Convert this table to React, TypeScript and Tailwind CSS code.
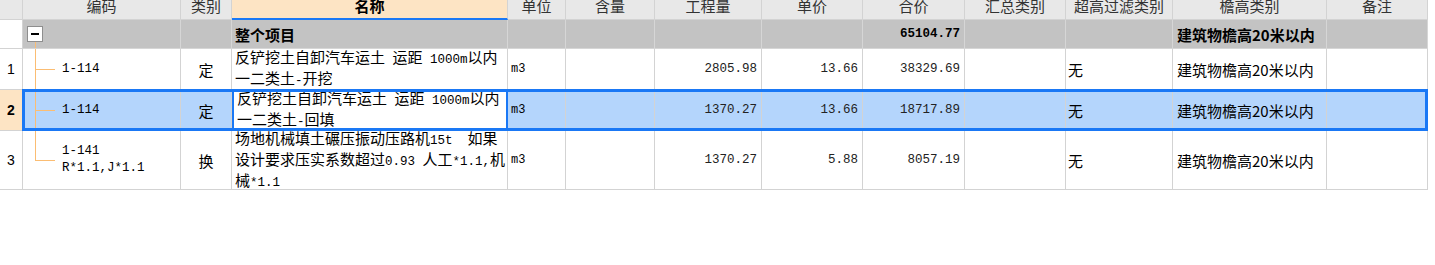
import React from 'react';

const COLS =
  'grid grid-cols-[23px_158px_51px_276px_58px_89px_107px_101px_102px_101px_107px_154px_101px]';

const cell = 'border-r border-b border-[#d3d3d3] flex items-center overflow-hidden whitespace-nowrap';

// half-width latin run, like the SimSun digits of the original
const L: React.FC<{ children: React.ReactNode }> = ({ children }) => (
  <span className="font-['Liberation_Mono',monospace] text-[12.5px] whitespace-pre">{children}</span>
);

const headers = [
  '',
  '编码',
  '类别',
  '名称',
  '单位',
  '含量',
  '工程量',
  '单价',
  '合价',
  '汇总类别',
  '超高过滤类别',
  '檐高类别',
  '备注',
];

interface Row {
  no: number;
  code: React.ReactNode;
  kind: string;
  name: React.ReactNode;
  unit: string;
  qty: string;
  price: string;
  total: string;
  height: string;
  last?: boolean;
  selected?: boolean;
}

const rows: Row[] = [
  {
    no: 1,
    code: '1-114',
    kind: '定',
    name: (
      <>
        反铲挖土自卸汽车运土<L> </L>运距<L> 1000m</L>以内
        <br />
        一二类土<L>-</L>开挖
      </>
    ),
    unit: 'm3',
    qty: '2805.98',
    price: '13.66',
    total: '38329.69',
    height: 'h-[41px]',
  },
  {
    no: 2,
    code: '1-114',
    kind: '定',
    name: (
      <>
        反铲挖土自卸汽车运土<L> </L>运距<L> 1000m</L>以内
        <br />
        一二类土<L>-</L>回填
      </>
    ),
    unit: 'm3',
    qty: '1370.27',
    price: '13.66',
    total: '18717.89',
    height: 'h-[41px]',
    selected: true,
  },
  {
    no: 3,
    code: (
      <>
        1-141
        <br />
        R*1.1,J*1.1
      </>
    ),
    kind: '换',
    name: (
      <>
        场地机械填土碾压振动压路机<L>15t  </L>如果
        <br />
        设计要求压实系数超过<L>0.93 </L>人工<L>*1.1,</L>机
        <br />
        械<L>*1.1</L>
      </>
    ),
    unit: 'm3',
    qty: '1370.27',
    price: '5.88',
    total: '8057.19',
    height: 'h-[59px]',
    last: true,
  },
];

const TREE = 'bg-[#fbbd73]';

const TreeLines: React.FC<{ last?: boolean }> = ({ last }) => (
  <>
    <div className={`absolute left-[12px] top-0 w-px ${TREE} ${last ? 'h-1/2' : 'h-full'}`} />
    <div className={`absolute left-[12px] top-1/2 h-px w-[20px] ${TREE}`} />
  </>
);

const num = "justify-end pr-[4px] font-['Liberation_Mono',monospace] text-[12.5px] text-[#222]";

export default function App() {
  return (
    <div className="w-[1435px] h-[265px] overflow-hidden bg-white font-['Noto_Sans_CJK_SC',sans-serif] text-[15px] leading-[17px] text-black">
      <div className="-mt-[8px] w-[1428px]">
        {/* header */}
        <div className={`${COLS} h-[28px]`}>
          {headers.map((h, i) => (
            <div
              key={i}
              className={`${cell} justify-center text-[#333] ${
                i === 3 ? 'bg-[#fde4c4] border-b-2 border-b-[#1a78f5] font-bold text-black' : 'bg-[#e8e8e8]'
              }`}
            >
              {h}
            </div>
          ))}
        </div>

        {/* group row */}
        <div className={`${COLS} h-[29px]`}>
          <div className={`${cell} bg-white`} />
          <div className={`${cell} bg-[#c3c3c3] relative border-r-[#d6d6d6] border-b-[#d6d6d6]`}>
            <div className="absolute left-[4px] top-[6px] w-[16px] h-[16px] border border-[#8e8e8e] bg-white flex items-center justify-center">
              <div className="w-[8px] h-[2px] bg-black" />
            </div>
            <div className={`absolute left-[12px] top-[22px] bottom-0 w-px ${TREE}`} />
          </div>
          <div className={`${cell} bg-[#c3c3c3] border-r-[#d6d6d6] border-b-[#d6d6d6]`} />
          <div className={`${cell} bg-[#c3c3c3] border-r-[#d6d6d6] border-b-[#d6d6d6] pl-[3px] font-bold`}>整个项目</div>
          {[0, 1, 2, 3].map((k) => (
            <div key={k} className={`${cell} bg-[#c3c3c3] border-r-[#d6d6d6] border-b-[#d6d6d6]`} />
          ))}
          <div className={`${cell} bg-[#c3c3c3] border-r-[#d6d6d6] border-b-[#d6d6d6] ${num} font-bold text-black`}>
            65104.77
          </div>
          <div className={`${cell} bg-[#c3c3c3] border-r-[#d6d6d6] border-b-[#d6d6d6]`} />
          <div className={`${cell} bg-[#c3c3c3] border-r-[#d6d6d6] border-b-[#d6d6d6]`} />
          <div className={`${cell} bg-[#c3c3c3] border-r-[#d6d6d6] border-b-[#d6d6d6] pl-[4px] font-bold`}>
            建筑物檐高20米以内
          </div>
          <div className={`${cell} bg-[#c3c3c3] border-r-[#d6d6d6] border-b-[#d6d6d6]`} />
        </div>

        {/* item rows */}
        {rows.map((r) => {
          const bg = r.selected ? 'bg-[#b4d5fc]' : 'bg-white';
          return (
            <div key={r.no} className={`${COLS} ${r.height} relative`}>
              <div
                className={`${cell} justify-center ${
                  r.selected ? 'bg-[#fde4c4] font-bold' : 'bg-white'
                } font-['Liberation_Sans',sans-serif] text-[14px]`}
              >
                {r.no}
              </div>
              <div className={`${cell} ${bg} relative pl-[39px] font-['Liberation_Mono',monospace] text-[12.5px] leading-[17px]`}>
                <TreeLines last={r.last} />
                <div>{r.code}</div>
              </div>
              <div className={`${cell} ${bg} justify-center`}>{r.kind}</div>
              <div
                className={`${cell} pl-[3px] ${
                  r.selected ? 'bg-white border-l-2 border-r-2 border-l-[#1a78f5] border-r-[#1a78f5] pl-[1px]' : 'bg-white'
                }`}
              >
                <div>{r.name}</div>
              </div>
              <div className={`${cell} ${bg} pl-[3px] font-['Liberation_Mono',monospace] text-[12px]`}>{r.unit}</div>
              <div className={`${cell} ${bg}`} />
              <div className={`${cell} ${bg} ${num}`}>{r.qty}</div>
              <div className={`${cell} ${bg} ${num}`}>{r.price}</div>
              <div className={`${cell} ${bg} ${num}`}>{r.total}</div>
              <div className={`${cell} ${bg}`} />
              <div className={`${cell} ${bg} pl-[2px]`}>无</div>
              <div className={`${cell} ${bg} pl-[4px]`}>建筑物檐高20米以内</div>
              <div className={`${cell} ${bg}`} />
              {r.selected && (
                <div className="pointer-events-none absolute left-[22px] right-0 -top-px bottom-0 border-[3px] border-[#1a78f5]" />
              )}
            </div>
          );
        })}
      </div>
    </div>
  );
}
